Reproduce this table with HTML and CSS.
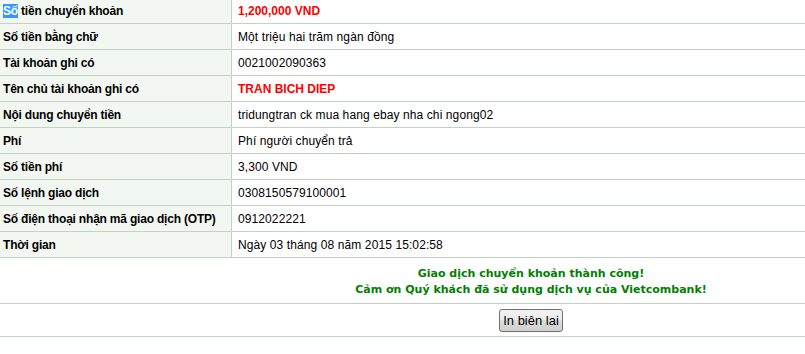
FILE: index.html
```html
<!DOCTYPE html>
<html>
<head>
<meta charset="utf-8">
<link rel="stylesheet" href="styles.css">
</head>
<body>
<table class="receipt">
  <tr><td class="label"><span class="sel">Số</span> tiền chuyển khoản</td><td class="value red">1,200,000 VND</td></tr>
  <tr><td class="label">Số tiền bằng chữ</td><td class="value">Một triệu hai trăm ngàn đồng</td></tr>
  <tr><td class="label">Tài khoản ghi có</td><td class="value">0021002090363</td></tr>
  <tr><td class="label">Tên chủ tài khoản ghi có</td><td class="value red">TRAN BICH DIEP</td></tr>
  <tr><td class="label">Nội dung chuyển tiền</td><td class="value">tridungtran ck mua hang ebay nha chi ngong02</td></tr>
  <tr><td class="label">Phí</td><td class="value">Phí người chuyển trả</td></tr>
  <tr><td class="label">Số tiền phí</td><td class="value">3,300 VND</td></tr>
  <tr><td class="label">Số lệnh giao dịch</td><td class="value">0308150579100001</td></tr>
  <tr><td class="label">Số điện thoại nhận mã giao dịch (OTP)</td><td class="value">0912022221</td></tr>
  <tr><td class="label">Thời gian</td><td class="value">Ngày 03 tháng 08 năm 2015 15:02:58</td></tr>
  <tr><td class="message" colspan="2">Giao dịch chuyển khoản thành công!<br>Cảm ơn Quý khách đã sử dụng dịch vụ của Vietcombank!</td></tr>
  <tr><td class="actions" colspan="2"><button class="print-btn" type="button">In biên lai</button></td></tr>
</table>
</body>
</html>
```

FILE: styles.css
```css
html, body {
  margin: 0;
  padding: 0;
  background: #ffffff;
  overflow: hidden;
}
.receipt {
  width: 805px;
  margin-top: -2px;
  border-collapse: collapse;
  font-family: "Liberation Sans", Arial, sans-serif;
  font-size: 12px;
  color: #000000;
}
.receipt td {
  border-bottom: 1px solid #c3d3c3;
  height: 25px;
  padding: 0;
  vertical-align: middle;
}
.label {
  width: 228px;
  padding-left: 3px !important;
  background: #f2f7f2;
  border-right: 1px solid #c3d3c3;
  font-weight: bold;
  letter-spacing: -0.2px;
  white-space: nowrap;
}
.value {
  padding-left: 6px !important;
  letter-spacing: 0.1px;
}
.red {
  color: #ff0000;
  font-weight: bold;
  letter-spacing: 0;
}
.sel {
  background: #3399ff;
  color: #ffffff;
}
.receipt td.message {
  height: 43px;
  text-align: center;
  padding-left: 257px !important;
  color: #008000;
  font-weight: bold;
  font-family: "DejaVu Sans", Tahoma, sans-serif;
  font-size: 11px;
  line-height: 16px;
  padding-top: 2px !important;
}
.receipt td.actions {
  height: 32px;
  text-align: center;
  padding-left: 257px !important;
}
.print-btn {
  font-family: "Liberation Sans", Arial, sans-serif;
  font-size: 13px;
  height: 23px;
  padding: 0 3px;
  color: #000;
  border: 1px solid #707070;
  border-radius: 3px;
  background: linear-gradient(#f2f2f2, #ebebeb 50%, #dddddd 50%, #cfcfcf);
}
```
